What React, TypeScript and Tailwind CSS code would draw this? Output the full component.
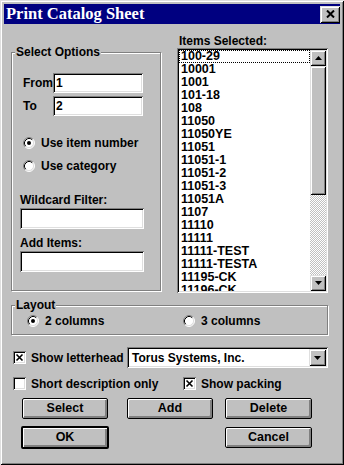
import React from "react";

const SUNKEN =
  "shadow-[inset_1px_1px_0_#808080,inset_-1px_-1px_0_#fff,inset_2px_2px_0_#000,inset_-2px_-2px_0_#dfdfdf]";
const RAISED =
  "shadow-[inset_1px_1px_0_#dfdfdf,inset_-1px_-1px_0_#000,inset_2px_2px_0_#fff,inset_-2px_-2px_0_#808080]";
const ETCHED =
  "border border-[#808080] shadow-[inset_1px_1px_0_#fff,1px_1px_0_#fff]";

function Radio({ checked }: { checked?: boolean }) {
  return (
    <svg width="12" height="12" viewBox="0 0 12 12" className="shrink-0">
      <circle cx="6" cy="6" r="5" fill="#fff" />
      <path d="M2.11 9.89 A5.5 5.5 0 0 1 9.89 2.11" fill="none" stroke="#808080" strokeWidth="1" />
      <path d="M9.89 2.11 A5.5 5.5 0 0 1 2.11 9.89" fill="none" stroke="#fff" strokeWidth="1" />
      <path d="M2.82 9.18 A4.5 4.5 0 0 1 9.18 2.82" fill="none" stroke="#000" strokeWidth="1" />
      <path d="M9.18 2.82 A4.5 4.5 0 0 1 2.82 9.18" fill="none" stroke="#dfdfdf" strokeWidth="1" />
      {checked && <circle cx="6" cy="6" r="2" fill="#000" />}
    </svg>
  );
}

function Check({ checked }: { checked?: boolean }) {
  return (
    <div className={`w-[13px] h-[13px] bg-white shrink-0 ${SUNKEN} flex items-center justify-center`}>
      {checked && (
        <svg width="13" height="13" viewBox="0 0 13 13">
          <path d="M3.5 3.5 L9.5 9.5 M9.5 3.5 L3.5 9.5" stroke="#000" strokeWidth="1.6" />
        </svg>
      )}
    </div>
  );
}

function Arrow({ up }: { up?: boolean }) {
  return (
    <svg width="7" height="4" viewBox="0 0 7 4">
      {up ? <path d="M3.5 0 L7 4 L0 4 Z" fill="#000" /> : <path d="M0 0 L7 0 L3.5 4 Z" fill="#000" />}
    </svg>
  );
}

function Btn({ label, w, def }: { label: string; w: string; def?: boolean }) {
  return (
    <div
      className={`${w} ${def ? "h-[23px] border-2" : "h-[21px] border"} border-black rounded-[2px] bg-[#c0c0c0] shadow-[inset_1px_1px_0_#fff,inset_-1px_-1px_0_#808080,inset_-2px_-2px_0_#808080] flex items-center justify-center text-[12.5px] font-bold`}
    >
      {label}
    </div>
  );
}

const items = [
  "100-29",
  "10001",
  "1001",
  "101-18",
  "108",
  "11050",
  "11050YE",
  "11051",
  "11051-1",
  "11051-2",
  "11051-3",
  "11051A",
  "1107",
  "11110",
  "11111",
  "11111-TEST",
  "11111-TESTA",
  "11195-CK",
  "11196-CK",
  "11197",
];

export default function App() {
  return (
    <div
      className={`w-[344px] h-[465px] bg-[#c0c0c0] p-[4px] ${RAISED} flex flex-col font-['Liberation_Sans',Arial,sans-serif] font-bold text-[12px] text-black overflow-hidden`}
    >
      {/* Title bar */}
      <div className="h-[20px] bg-[#000080] flex items-center justify-between pl-[2px] pr-[0px] shrink-0">
        <span className="font-['Liberation_Serif','Times_New_Roman',serif] text-[16.5px] leading-none text-white font-bold">
          Print Catalog Sheet
        </span>
        <div className={`w-[20px] h-[17px] bg-[#c0c0c0] ${RAISED} flex items-center justify-center`}>
          <svg width="9" height="8" viewBox="0 0 9 8">
            <path d="M1 0.5 L8 7.5 M8 0.5 L1 7.5" stroke="#000" strokeWidth="2" />
          </svg>
        </div>
      </div>

      {/* Body */}
      <div className="flex-1 flex flex-col pl-[7px]">
        {/* Top row */}
        <div className="flex items-start">
          {/* Select Options group */}
          <div className={`relative mt-[28px] w-[150px] h-[239px] ${ETCHED} flex flex-col`}>
            <span className="absolute left-[3px] top-[-8px] bg-[#c0c0c0] px-[1px] leading-[14px]">
              Select Options
            </span>
            <div className="flex items-center mt-[20px] pl-[11px]">
              <span className="w-[30px]">From</span>
              <div className={`w-[90px] h-[20px] bg-white ${SUNKEN} pl-[3px] leading-[20px]`}>1</div>
            </div>
            <div className="flex items-center mt-[3px] pl-[11px]">
              <span className="w-[30px]">To</span>
              <div className={`w-[90px] h-[20px] bg-white ${SUNKEN} pl-[3px] leading-[20px]`}>2</div>
            </div>
            <div className="flex items-center gap-[6px] mt-[19px] pl-[11px] h-[16px]">
              <Radio checked />
              <span>Use item number</span>
            </div>
            <div className="flex items-center gap-[6px] mt-[7px] pl-[11px] h-[16px]">
              <Radio />
              <span>Use category</span>
            </div>
            <div className="mt-[19px] pl-[8px] leading-[14px]">Wildcard Filter:</div>
            <div className={`ml-[8px] mt-[1px] w-[124px] h-[21px] bg-white ${SUNKEN}`} />
            <div className="mt-[7px] pl-[8px] leading-[14px]">Add Items:</div>
            <div className={`ml-[8px] mt-[1px] w-[124px] h-[21px] bg-white ${SUNKEN}`} />
          </div>

          {/* Items Selected */}
          <div className="ml-[16px] mt-[10px] flex flex-col">
            <div className="pl-[2px] leading-[14px] h-[14px]">Items Selected:</div>
            <div className={`w-[151px] h-[245px] bg-white ${SUNKEN} p-[2px] flex`}>
              <div className="flex-1 overflow-hidden text-[12.5px]">
                {items.map((it, i) => (
                  <div
                    key={it}
                    className={`h-[13px] leading-[11px] px-[1px] border border-dotted ${
                      i === 0 ? "border-black" : "border-transparent"
                    }`}
                  >
                    {it}
                  </div>
                ))}
              </div>
              <div className="w-[16px] flex flex-col">
                <div className={`h-[16px] bg-[#c0c0c0] ${RAISED} flex items-center justify-center`}>
                  <Arrow up />
                </div>
                <div className={`h-[129px] bg-[#c0c0c0] ${RAISED}`} />
                <div className="flex-1 bg-[image:repeating-conic-gradient(#fff_0%_25%,#c0c0c0_0%_50%)] bg-[length:2px_2px]" />
                <div className={`h-[16px] bg-[#c0c0c0] ${RAISED} flex items-center justify-center`}>
                  <Arrow />
                </div>
              </div>
            </div>
          </div>
        </div>

        {/* Layout group */}
        <div className={`relative mt-[12px] w-[317px] h-[30px] ${ETCHED} flex items-center`}>
          <span className="absolute left-[3px] top-[-8px] bg-[#c0c0c0] px-[1px] leading-[14px]">Layout</span>
          <div className="flex items-center gap-[6px] ml-[15px] w-[156px] mt-[2px]">
            <Radio checked />
            <span>2 columns</span>
          </div>
          <div className="flex items-center gap-[6px] mt-[2px]">
            <Radio />
            <span>3 columns</span>
          </div>
        </div>

        {/* Letterhead row */}
        <div className="flex items-center mt-[12px] h-[21px]">
          <div className="ml-[2px] flex items-center gap-[5px] w-[114px]">
            <Check checked />
            <span>Show letterhead</span>
          </div>
          <div className={`w-[201px] h-[21px] bg-white ${SUNKEN} flex items-center justify-between p-[2px]`}>
            <span className="pl-[3px]">Torus Systems, Inc.</span>
            <div className={`w-[17px] h-[17px] bg-[#c0c0c0] ${RAISED} flex items-center justify-center`}>
              <Arrow />
            </div>
          </div>
        </div>

        {/* Checkboxes row */}
        <div className="flex items-center mt-[9px] h-[13px]">
          <div className="ml-[2px] flex items-center gap-[5px] w-[170px]">
            <Check />
            <span>Short description only</span>
          </div>
          <div className="flex items-center gap-[5px]">
            <Check checked />
            <span>Show packing</span>
          </div>
        </div>

        {/* Buttons row 1 */}
        <div className="flex items-center mt-[8px] ml-[11px]">
          <Btn label="Select" w="w-[86px]" />
          <div className="ml-[19px]">
            <Btn label="Add" w="w-[86px]" />
          </div>
          <div className="ml-[12px]">
            <Btn label="Delete" w="w-[87px]" />
          </div>
        </div>

        {/* Buttons row 2 */}
        <div className="flex items-center mt-[7px] ml-[10px]">
          <Btn label="OK" w="w-[88px]" def />
          <div className="ml-[116px]">
            <Btn label="Cancel" w="w-[87px]" />
          </div>
        </div>
      </div>
    </div>
  );
}
